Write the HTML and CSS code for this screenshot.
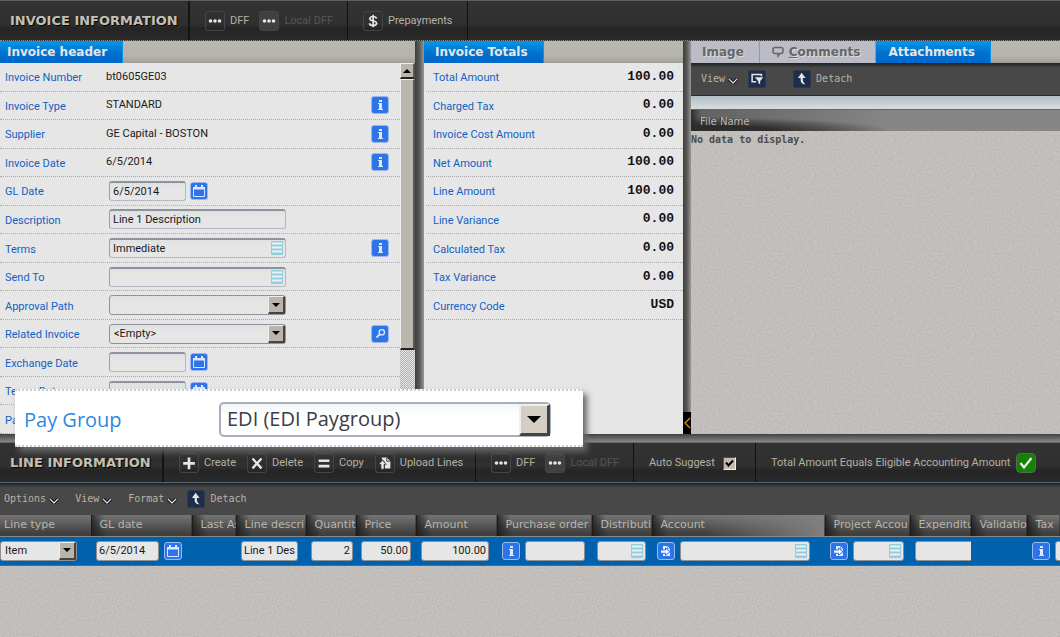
FILE: index.html
```
<!DOCTYPE html>
<html lang="en">
<head>
<meta charset="utf-8">
<title>Invoice Information</title>
<link rel="stylesheet" href="styles.css">
</head>
<body>
<svg class="defs" aria-hidden="true">
  <symbol id="dots" viewBox="0 0 20 20"><circle cx="5" cy="10" r="2"/><circle cx="10" cy="10" r="2"/><circle cx="15" cy="10" r="2"/></symbol>
  <symbol id="plus" viewBox="0 0 20 20"><path d="M8.500 4h3v5h5v3h-5v5h-3v-5h-5V9h5z"/></symbol>
  <symbol id="cross" viewBox="0 0 20 20"><path d="M5 5l10 11M15 5L5 16" fill="none" stroke="#e6e6e6" stroke-width="2.600"/></symbol>
  <symbol id="equal" viewBox="0 0 20 20"><path d="M4 6h12v3H4zM4 12h12v3H4z"/></symbol>
  <symbol id="upload" viewBox="0 0 20 20"><path d="M7 4h5l4 4v8h-6V9L6 5z"/><path d="M12 4v4h4" fill="none" stroke="#333"/><path d="M7 7l4.500 4.500H9V17H5.500v-5.500H3z" stroke="#2b2b2b" stroke-width=".8"/></symbol>
  <symbol id="dollar" viewBox="0 0 20 20"><path d="M14 7.200C13.500 5.500 12 5 10 5 8 5 6.500 6 6.500 7.500c0 3.500 7.500 1.500 7.500 5 0 1.600-1.500 2.500-4 2.500-2 0-3.700-.8-4-2.500M10.200 3v14" fill="none" stroke="#e6e6e6" stroke-width="1.900"/></symbol>
  <symbol id="info" viewBox="0 0 16 16"><path d="M7 3h3v2H7zM6 6h4v6h1v1H6v-1h1V7H6z"/></symbol>
  <symbol id="cal" viewBox="0 0 16 16"><path d="M2.500 4.500h11v9h-11z" fill="none" stroke="#dce8ff"/><path d="M2 4h12v2.500H2zM4 2h2v3H4zM10 2h2v3h-2z" fill="#dce8ff"/></symbol>
  <symbol id="search" viewBox="0 0 18 18"><circle cx="11" cy="7" r="3" fill="none" stroke="#dce8ff" stroke-width="1.500"/><path d="M9 9l-4 4" stroke="#dce8ff" stroke-width="2"/></symbol>
  <symbol id="list" viewBox="0 0 12 14"><rect width="12" height="14" rx="1" fill="#96cddc"/><path d="M1 2.500h10M1 6.500h10M1 10.500h10" stroke="#e6f4f6" stroke-width="1.800"/></symbol>
  <symbol id="chev" viewBox="0 0 10 6"><path d="M1 1l4 4 4-4" fill="none" stroke="#000" stroke-width="3"/><path d="M1 1l4 4 4-4" fill="none" stroke="#e0e0e8" stroke-width="1.300"/></symbol>
  <symbol id="detach" viewBox="0 0 18 18"><path d="M8.500 2L13 8h-3c-.3 3 .3 5 3 7-4 0-6-2-5.500-7h-3z"/></symbol>
  <symbol id="query" viewBox="0 0 18 18"><path d="M14 6V4H3.500v8H8" fill="none" stroke="#e6e6e6" stroke-width="1.700"/><path d="M6.500 7H16l-3.500 4.500V15l-2-1.500v-2z"/></symbol>
  <symbol id="pick" viewBox="0 0 16 16"><path d="M5 3h4v3h3v7H5z" fill="#e6eeff"/><path d="M9.500 3l2.500 2.500H9.500z" fill="#e6eeff"/><path d="M2.500 7h5V5l4.500 3.700-4.500 3.600v-2h-5z" fill="#f2f6ff" stroke="#2c74e8"/></symbol>
</svg>

<header class="bar top-bar">
  <h1 class="bar-title bar-title-top">INVOICE INFORMATION</h1>
  <div class="bar-group group-dff">
    <button class="action"><svg class="tile"><use href="#dots"/></svg>DFF</button>
    <button class="action" disabled><svg class="tile"><use href="#dots"/></svg>Local DFF</button>
  </div>
  <div class="bar-group group-pay">
    <button class="action"><svg class="tile"><use href="#dollar"/></svg>Prepayments</button>
  </div>
</header>

<main class="workspace">
  <section class="pane">
    <div class="tabs"><button class="tab active">Invoice header</button></div>
    <div class="scroll-area">
      <div class="rows">
        <div class="row"><span class="label">Invoice Number</span><span class="value">bt0605GE03</span></div>
        <div class="row"><span class="label">Invoice Type</span><span class="value">STANDARD</span><button class="sq" aria-label="Invoice type details"><svg><use href="#info"/></svg></button></div>
        <div class="row"><span class="label">Supplier</span><span class="value">GE Capital - BOSTON</span><button class="sq" aria-label="Supplier details"><svg><use href="#info"/></svg></button></div>
        <div class="row"><span class="label">Invoice Date</span><span class="value">6/5/2014</span><button class="sq" aria-label="Invoice date details"><svg><use href="#info"/></svg></button></div>
        <div class="row"><label class="label" for="gl">GL Date</label><span class="control"><input class="field date" id="gl" value="6/5/2014"><button class="sq" aria-label="Pick GL date"><svg><use href="#cal"/></svg></button></span></div>
        <div class="row"><label class="label" for="desc">Description</label><span class="control"><input class="field wide" id="desc" value="Line 1 Description"></span></div>
        <div class="row"><label class="label" for="terms">Terms</label><span class="control lov"><input class="field wide" id="terms" value="Immediate"><svg class="lov-icon"><use href="#list"/></svg></span><button class="sq" aria-label="Terms details"><svg><use href="#info"/></svg></button></div>
        <div class="row"><label class="label" for="send">Send To</label><span class="control lov"><input class="field wide" id="send"><svg class="lov-icon"><use href="#list"/></svg></span></div>
        <div class="row"><label class="label" for="path">Approval Path</label><span class="control"><span class="drop"><select class="field wide" id="path"><option></option></select></span></span></div>
        <div class="row"><label class="label" for="rel">Related Invoice</label><span class="control"><span class="drop"><select class="field wide" id="rel"><option>&lt;Empty&gt;</option></select></span></span><button class="sq" aria-label="Find related invoice"><svg><use href="#search"/></svg></button></div>
        <div class="row"><label class="label" for="exch">Exchange Date</label><span class="control"><input class="field date" id="exch"><button class="sq" aria-label="Pick exchange date"><svg><use href="#cal"/></svg></button></span></div>
        <div class="row"><label class="label" for="td">Terms Date</label><span class="control"><input class="field date" id="td"><button class="sq" aria-label="Pick terms date"><svg><use href="#cal"/></svg></button></span></div>
        <div class="row"><span class="label">Pay Group</span></div>
      </div>
      <div class="scrollbar"><button class="scroll-up" aria-label="Scroll up"></button><div class="thumb"></div><div class="track"></div></div>
    </div>
  </section>

  <div class="splitter"></div>

  <section class="pane">
    <div class="tabs"><button class="tab active">Invoice Totals</button></div>
    <div class="rows totals">
      <div class="row"><span class="label">Total Amount</span><span class="amount">100.00</span></div>
      <div class="row"><span class="label">Charged Tax</span><span class="amount">0.00</span></div>
      <div class="row"><span class="label">Invoice Cost Amount</span><span class="amount">0.00</span></div>
      <div class="row"><span class="label">Net Amount</span><span class="amount">100.00</span></div>
      <div class="row"><span class="label">Line Amount</span><span class="amount">100.00</span></div>
      <div class="row"><span class="label">Line Variance</span><span class="amount">0.00</span></div>
      <div class="row"><span class="label">Calculated Tax</span><span class="amount">0.00</span></div>
      <div class="row"><span class="label">Tax Variance</span><span class="amount">0.00</span></div>
      <div class="row"><span class="label">Currency Code</span><span class="amount">USD</span></div>
    </div>
  </section>

  <div class="splitter"><button class="collapse" aria-label="Collapse panel"><svg viewBox="0 0 8 12"><path d="M7 1L2 6l5 5" fill="none" stroke="#e09000" stroke-width="1.300"/></svg></button></div>

  <section class="pane textured">
    <div class="tabs">
      <button class="tab plain">Image</button>
      <button class="tab plain"><svg class="bubble" viewBox="0 0 12 12"><path d="M3 1.500h6q2 0 2 2v2q0 2-2 2H8L6 10V7.500H3q-2 0-2-2v-2q0-2 2-2z" fill="none" stroke="#666" stroke-width="1.500"/></svg><span><u>C</u>omments</span></button>
      <button class="tab active">Attachments</button>
    </div>
    <div class="tools tools-files">
      <button class="menu">View<svg class="chev"><use href="#chev"/></svg></button>
      <button class="navy" aria-label="Query by example"><svg><use href="#query"/></svg></button>
      <button class="menu detach"><svg class="navy"><use href="#detach"/></svg>Detach</button>
    </div>
    <div class="strip"></div>
    <div class="file-head">File Name</div>
    <p class="empty">No data to display.</p>
  </section>

  <div class="callout">
    <label class="callout-label" for="pg">Pay Group</label>
    <span class="drop drop-big"><select class="field big" id="pg"><option>EDI (EDI Paygroup)</option></select></span>
  </div>
</main>

<div class="h-splitter"></div>

<section class="bar line-bar">
  <h2 class="bar-title bar-title-line">LINE INFORMATION</h2>
  <div class="bar-group group-edit">
    <button class="action"><svg class="tile"><use href="#plus"/></svg>Create</button>
    <button class="action"><svg class="tile"><use href="#cross"/></svg>Delete</button>
    <button class="action"><svg class="tile"><use href="#equal"/></svg>Copy</button>
    <button class="action"><svg class="tile"><use href="#upload"/></svg>Upload Lines</button>
  </div>
  <div class="bar-group group-dff">
    <button class="action"><svg class="tile"><use href="#dots"/></svg>DFF</button>
    <button class="action" disabled><svg class="tile"><use href="#dots"/></svg>Local DFF</button>
  </div>
  <div class="bar-group group-auto">
    <label for="auto">Auto Suggest</label><input class="check" type="checkbox" id="auto" checked>
  </div>
  <div class="bar-group group-status">
    <span>Total Amount Equals Eligible Accounting Amount</span>
    <svg class="ok" viewBox="0 0 20 20"><rect x=".5" y=".5" width="19" height="19" rx="4" fill="#148200" stroke="#5a6a5a"/><path d="M4.500 10l3.500 4.500L15.500 5" fill="none" stroke="#f0f0f0" stroke-width="2.200"/></svg>
  </div>
</section>

<div class="tools tools-lines">
  <button class="menu">Options<svg class="chev"><use href="#chev"/></svg></button>
  <button class="menu">View<svg class="chev"><use href="#chev"/></svg></button>
  <button class="menu">Format<svg class="chev"><use href="#chev"/></svg></button>
  <button class="menu"><svg class="navy"><use href="#detach"/></svg>Detach</button>
</div>

<table class="lines">
  <colgroup><col class="c-type"><col class="c-date"><col class="c-last"><col class="c-desc"><col class="c-qty"><col class="c-price"><col class="c-amt"><col class="c-po"><col class="c-dist"><col class="c-acct"><col class="c-proj"><col class="c-exp"><col class="c-val"><col class="c-tax"></colgroup>
  <thead><tr><th>Line type</th><th>GL date</th><th>Last As</th><th>Line descri</th><th>Quantit</th><th>Price</th><th>Amount</th><th>Purchase order</th><th>Distributi</th><th class="lit">Account</th><th>Project Accou</th><th>Expenditu</th><th>Validatio</th><th>Tax</th></tr></thead>
  <tbody><tr>
    <td><div class="cell"><span class="drop"><select class="field f-type" aria-label="Line type"><option>Item</option></select></span></div></td>
    <td><div class="cell"><input class="field f-date" aria-label="GL date" value="6/5/2014"><button class="sq" aria-label="Pick line GL date"><svg><use href="#cal"/></svg></button></div></td>
    <td></td>
    <td><div class="cell"><input class="field f-desc" aria-label="Line description" value="Line 1 Description"></div></td>
    <td><div class="cell"><input class="field num f-qty" aria-label="Quantity" value="2"></div></td>
    <td><div class="cell"><input class="field num f-price" aria-label="Price" value="50.00"></div></td>
    <td><div class="cell"><input class="field num f-amt" aria-label="Amount" value="100.00"></div></td>
    <td><div class="cell"><button class="sq" aria-label="Order details"><svg><use href="#info"/></svg></button><input class="field f-po" aria-label="Purchase order"></div></td>
    <td><div class="cell"><span class="lov"><input class="field f-dist" aria-label="Distribution"><svg class="lov-icon"><use href="#list"/></svg></span></div></td>
    <td><div class="cell"><button class="sq" aria-label="Choose account"><svg><use href="#pick"/></svg></button><span class="lov"><input class="field f-acct" aria-label="Account"><svg class="lov-icon"><use href="#list"/></svg></span></div></td>
    <td><div class="cell"><button class="sq" aria-label="Choose project account"><svg><use href="#pick"/></svg></button><span class="lov"><input class="field f-proj" aria-label="Project account"><svg class="lov-icon"><use href="#list"/></svg></span></div></td>
    <td><div class="cell"><input class="field f-po" aria-label="Expenditure"></div></td>
    <td></td>
    <td><div class="cell"><button class="sq" aria-label="Tax details"><svg><use href="#info"/></svg></button><input class="field f-po" aria-label="Tax code"></div></td>
  </tr></tbody>
</table>
<div class="filler textured"></div>
</body>
</html>
```

FILE: styles.css
```
*, *::after { box-sizing: border-box; }

body {
  margin: 0;
  height: 100vh;
  display: flex;
  flex-direction: column;
  overflow: hidden;
  background: #c6c2bf;
  color: #1a1a1a;
  font: 11px/14px Roboto, "Open Sans", sans-serif;
}

button { margin: 0; padding: 0; border: 0; background: none; color: inherit; font: inherit; }
button, .label, th, span { white-space: nowrap; }
svg { display: block; flex: none; }
.defs { position: absolute; width: 0; height: 0; }

/* Dark title bars */
.bar {
  flex: none;
  display: flex;
  align-items: stretch;
  color: #b4b0a6;
  background: linear-gradient(#333 0%, #2f2f2f 62%, #252525 70%, #2a2a2a 100%);
}
.top-bar { height: 41px; border-top: 1px solid #5a5e5c; border-bottom: 1px dotted #8a8a86; }
.line-bar { height: 40px; border-bottom: 1px solid #56626c; }
.line-bar > * { padding-top: 1px; }
.bar-title {
  margin: 0;
  padding-left: 10px;
  display: flex;
  align-items: center;
  flex: none;
  border-right: 2px solid #141414;
  color: #c4c0b6;
  font: bold 13px/16px "DejaVu Sans", sans-serif;
  text-shadow: 1px 1px 1px #000;
}
.bar-title-top { width: 190px; }
.bar-title-line { width: 164px; }
.bar-group { flex: none; display: flex; align-items: center; gap: 10px; padding-left: 15px; border-right: 1px solid #111; }
.group-dff { width: 158px; }
.group-pay { width: 120px; }
.group-edit { width: 312px; gap: 11px; }
.group-auto { width: 122px; gap: 8px; }
.group-status { border: 0; gap: 6px; }
.action { display: flex; align-items: center; gap: 5px; }
.action:disabled { color: #565656; }
.tile { width: 20px; height: 20px; border: 1px solid #464646; border-radius: 3px; fill: #e6e6e6; }
.action:disabled .tile { background: #404040; }
.check {
  appearance: none;
  width: 13px;
  height: 13px;
  margin: 0;
  border: 1px solid #eee;
  border-top-color: #555;
  border-left-color: #555;
  background: #c9b9ab url("data:image/svg+xml,%3Csvg xmlns='http://www.w3.org/2000/svg' viewBox='0 0 11 11'%3E%3Cpath d='M2 4.500l2.500 3L9 2.500' fill='none' stroke='%23000' stroke-width='2'/%3E%3C/svg%3E");
}
.ok { width: 20px; height: 20px; }

.workspace {
  position: relative;
  flex: 11 1 0;
  min-height: 0;
  display: grid;
  grid-template-columns: 415fr 9px 259fr 8px 369fr;
  grid-template-rows: minmax(0, 1fr);
}
.pane { min-width: 0; display: flex; flex-direction: column; background: #e6e6e6; }
.splitter { display: flex; align-items: flex-end; background: linear-gradient(90deg, #3c3d39, #5a5a58 50%, #999); }
.collapse { width: 8px; height: 22px; background: #000; }
.collapse svg { width: 8px; height: 12px; }
.h-splitter { flex: none; height: 9px; background: linear-gradient(#41423e, #858585 85%, #555); }
.pane.textured, .textured {
  background: #c7c3c0 url("data:image/svg+xml,%3Csvg xmlns='http://www.w3.org/2000/svg' width='160' height='160'%3E%3Cfilter id='n'%3E%3CfeTurbulence type='fractalNoise' baseFrequency='.5' numOctaves='2' stitchTiles='stitch'/%3E%3CfeColorMatrix values='0 0 0 0 .35 0 0 0 0 .33 0 0 0 0 .31 .6 0 0 0 -.17'/%3E%3C/filter%3E%3Crect width='160' height='160' filter='url(%23n)'/%3E%3C/svg%3E");
}

.tabs { flex: none; height: 22px; display: flex; background: linear-gradient(#b8b8b0 0%, #b4b4ac 70%, #a0a098 100%); }
.tab { display: flex; align-items: center; padding: 0 15px 0 12px; font: bold 12px/14px "DejaVu Sans", sans-serif; }
.tab:first-child { padding-left: 7px; }
.pane:nth-child(3) .tab:first-child, .tab.plain:first-child { padding-left: 11px; }
.active { color: #e6e6e6; background: linear-gradient(#0698e8, #0070d0 55%, #0068c8); border-right: 1px solid #0a96e6; }
.plain { gap: 5px; color: #666; background: #bcbcc6; border-right: 1px solid #999; text-shadow: 1px 1px 0 #ddd; }
.bubble { width: 12px; height: 12px; }

/* Label and value rows */
.scroll-area { flex: 1; min-height: 0; display: grid; grid-template-columns: 1fr 15px; }
.rows { flex: 1; min-height: 0; display: grid; grid-template-rows: repeat(13, minmax(0, 1fr)); }
.row { display: flex; align-items: center; padding: 0 11px 0 5px; border-bottom: 1px dotted #aaa; }
.label { color: #1062c4; padding-top: 3px; }
.scroll-area .label { flex: none; width: 101px; }
.row > .sq { margin-left: auto; }
.control { display: flex; align-items: center; gap: 4px; padding-left: 3px; }
.totals { padding: 0 0 0 2px; }
.totals .row { justify-content: space-between; padding: 0 9px 0 7px; }
.amount { color: #111; font: bold 13px/14px "Liberation Mono", monospace; }

.field {
  height: 20px;
  margin: 0;
  padding: 0 3px;
  border: 1px solid #b4b8c4;
  border-top: 2px solid #8e929e;
  border-left-color: #9ca0aa;
  border-radius: 3px;
  background: linear-gradient(#dfe2e2, #e6e6e6 40%);
  color: #1a1a1a;
  font: inherit;
}
select.field { appearance: none; border-color: #8e929e; border-top-width: 1px; padding-left: 4px; }
.date { width: 77px; }
.wide { width: 177px; }
.lov { position: relative; display: flex; }
.lov-icon { position: absolute; right: 3px; top: 3px; width: 12px; height: 14px; }
.drop { position: relative; display: flex; }
.drop::after {
  content: "";
  position: absolute;
  right: 1px;
  top: 1px;
  bottom: 1px;
  width: 17px;
  border: 1px solid #f0eee8;
  border-right: 2px solid #444;
  border-bottom: 2px solid #444;
  background: #bab4aa url("data:image/svg+xml,%3Csvg xmlns='http://www.w3.org/2000/svg' viewBox='0 0 8 4'%3E%3Cpath d='M0 0h8L4 4z'/%3E%3C/svg%3E") center / 8px 4px no-repeat;
  pointer-events: none;
}
.sq { flex: none; width: 18px; height: 18px; border: 1px solid #9cb8ec; border-radius: 3px; background: #2c74e8; fill: #e0e8f8; }
.sq svg { width: 16px; height: 16px; }

.scrollbar { display: flex; flex-direction: column; }
.scroll-up, .thumb { border: 1px solid #eee; border-right: 2px solid #555; border-bottom: 2px solid #222; background: #bab5ad; }
.scroll-up { height: 16px; background: #bab5ad url("data:image/svg+xml,%3Csvg xmlns='http://www.w3.org/2000/svg' viewBox='0 0 8 4'%3E%3Cpath d='M0 4h8L4 0z'/%3E%3C/svg%3E") center / 8px 4px no-repeat; }
.thumb { flex: 270; }
.track { flex: 85; background: repeating-conic-gradient(#b5b0a8 0 25%, #e6e6e6 0 50%) 0 0 / 2px 2px; }

/* Attachments */
.tools { flex: none; display: flex; align-items: center; background: linear-gradient(#1d232a, #484848 15%, #484848); color: #b8b2a6; font: 10px/14px "DejaVu Sans Mono", monospace; text-shadow: -1px 0 1px #000; }
.menu { display: flex; align-items: center; gap: 3px; }
.chev { width: 10px; height: 6px; margin-top: 4px; }
.tools-files { height: 33px; gap: 10px; padding: 0 0 0 10px; border-bottom: 1px solid #2c2c2c; }
.navy { width: 18px; height: 18px; border: 1px solid #303a48; border-radius: 2px; background: #1c2e4c; fill: #e6e6e6; }
.navy svg { width: 16px; height: 16px; }
.detach { margin-left: 17px; }
.detach, .menu:last-child { gap: 5px; }
.strip { flex: none; height: 14px; background: linear-gradient(#b0bec4, #d8dede); border-bottom: 1px solid #666; }
.file-head {
  flex: none;
  height: 21px;
  padding: 5px 0 0 9px;
  color: #bdb9b0;
  background:
    radial-gradient(ellipse 200px 14px at 0 100%, #2c2c2c, #2c2c2c 40%, transparent),
    linear-gradient(90deg, #2c2c2c, transparent 10px),
    linear-gradient(90deg, #606060, #868686 200px);
  font: 10px/14px "DejaVu Sans", sans-serif;
  text-shadow: -1px 0 0 #333;
}
.empty { margin: 2px 0 0; color: #4c4c4c; font: bold 10px/14px "DejaVu Sans Mono", monospace; }

/* Enlarged row over the form */
.callout {
  position: absolute;
  z-index: 2;
  left: 15px;
  bottom: -13px;
  width: 568px;
  height: 58px;
  display: flex;
  align-items: center;
  padding: 2px 32px 0 9px;
  justify-content: space-between;
  border-top: 2px dotted #ccc;
  border-bottom: 2px dotted #ccc;
  background: #fff;
  box-shadow: 4px 5px 6px #666;
  font: 20px/26px "Open Sans", "Noto Sans", sans-serif;
}
.callout-label { color: #2e88e0; padding-top: 2px; }
.big { width: 332px; height: 35px; border-width: 2px; border-radius: 5px; }
select.big { padding-left: 6px; border-top-width: 2px; border-color: #a8aebc; background: linear-gradient(#f2f6f6, #fff 40%); color: #3c3c44; }
.drop-big::after { top: 2px; bottom: 1px; width: 31px; border-width: 2px; border-right-width: 3px; border-bottom-width: 3px; background-color: #d4cec4; background-size: 14px 7px; }

/* Lines grid */
.tools-lines { height: 32px; gap: 16px; padding-left: 4px; }
.tools-lines .menu:last-child { margin-left: -6px; }
.lines { flex: none; width: 100%; table-layout: fixed; border-collapse: collapse; }
.c-type { width: 91px; } .c-date { width: 101px; } .c-last { width: 44px; } .c-desc { width: 70px; }
.c-qty { width: 50px; } .c-price { width: 60px; } .c-amt { width: 81px; } .c-po { width: 95px; }
.c-dist { width: 60px; } .c-acct { width: 173px; } .c-proj { width: 85px; } .c-exp { width: 61px; }
.c-val { width: 56px; } .c-tax { width: 33px; }
th {
  height: 21px;
  padding: 0 0 0 8px;
  overflow: hidden;
  border-right: 1px solid #1c1c1c;
  border-bottom: 1px solid #8a8a84;
  background: linear-gradient(80deg, #202020, transparent 16px), linear-gradient(#747474, #606060 35%, #3e3e3e 90%);
  color: #b8b4ac;
  font: 11px/14px "DejaVu Sans", sans-serif;
  text-align: left;
}
th:first-child { padding-left: 4px; background: linear-gradient(#747474, #606060 35%, #3e3e3e 90%); }
.lit { background: linear-gradient(80deg, #202020, transparent 16px), linear-gradient(95deg, transparent 30%, #808080), linear-gradient(#747474, #606060 35%, #3e3e3e 90%); }
td { height: 29px; padding: 0; overflow: hidden; background: #0062ae; border-bottom: 1px solid #1478d0; border-top: 1px solid #1478d0; }
.cell { display: flex; align-items: center; gap: 5px; padding-left: 5px; overflow: hidden; }
td:first-child .cell { padding-left: 0; }
.lines .field { flex: none; border-top-width: 1px; border-color: #909090; background: #e6e6e6; padding: 0 2px; }
.lines .num { text-align: right; }
.lines .f-type { width: 77px; padding-left: 4px; }
.f-date { width: 63px; } .f-desc { width: 57px; } .f-qty { width: 42px; } .f-price { width: 50px; }
.f-amt { width: 68px; } .f-po { width: 60px; } .f-dist { width: 49px; } .f-acct { width: 130px; } .f-proj { width: 51px; }
.filler { flex: 2 1 0; min-height: 0; }
```
